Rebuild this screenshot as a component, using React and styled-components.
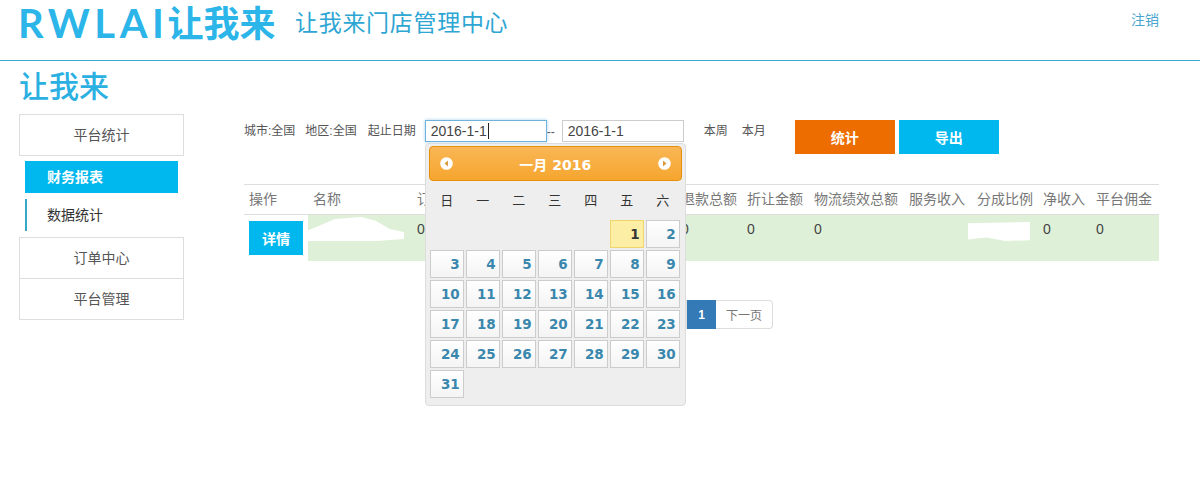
import styled, { createGlobalStyle } from "styled-components";

const GlobalStyle = createGlobalStyle`
  html, body { margin: 0; padding: 0; background: #fff; }
  body {
    font-family: "Liberation Sans", "Noto Sans CJK SC", sans-serif;
    font-size: 14px;
    color: #333;
  }
  #root { min-height: 485px; }
  * { box-sizing: border-box; }
`;

const Header = styled.header`
  height: 61px;
  border-bottom: 1px solid #3aa8cf;
  display: flex;
  align-items: flex-start;
  padding-left: 18px;
  padding-right: 41px;
`;

const Logo = styled.div`
  font-family: "Lato", "Noto Sans CJK SC", sans-serif;
  font-size: 40px;
  font-weight: 700;
  line-height: 47px;
  color: #2cb5e8;
  display: flex;
  height: 47px;
  width: 277px;
  white-space: nowrap;
  span { letter-spacing: 4.6px; }
  b { font-size: 36px; font-weight: 700; margin-left: -1px; }
`;

const SiteTitle = styled.div`
  font-size: 23px;
  line-height: 47px;
  color: #2ea6d3;
  letter-spacing: 0.7px;
  flex: 1;
`;

const Logout = styled.a`
  font-size: 14px;
  line-height: 40px;
  color: #4aa5d0;
`;

const Brand = styled.h1`
  margin: 0;
  padding-left: 19px;
  height: 53px;
  font-size: 30px;
  line-height: 52px;
  font-weight: 500;
  color: #2bb0e2;
`;

const Body = styled.div`
  display: flex;
  padding-left: 19px;
`;

const Sidebar = styled.nav`
  width: 165px;
  flex-shrink: 0;
  display: flex;
  flex-direction: column;
`;

const NavItem = styled.div`
  height: 42px;
  margin-top: ${(p) => p.$joined ? -1 : 0}px;
  padding-bottom: 2px;
  border: 1px solid #ddd;
  display: flex;
  align-items: center;
  justify-content: center;
  color: #555;
`;

const SubMenu = styled.div`
  padding: 5px 6px 6px;
  display: flex;
  flex-direction: column;
  gap: 6px;
`;

const SubItem = styled.div`
  height: 32px;
  line-height: 32px;
  padding-left: ${(p) => p.$active ? 22 : 20}px;
  font-weight: ${(p) => p.$active ? 700 : 400};
  color: ${(p) => p.$active ? "#fff" : "#333"};
  background: ${(p) => p.$active ? "#00b7ee" : "transparent"};
  border-left: ${(p) => p.$active ? "none" : "2px solid #37a9c6"};
`;

const Main = styled.main`
  width: 915px;
  margin-left: 60px;
  padding-top: 6px;
`;

const Filters = styled.div`
  height: 34px;
  display: flex;
  align-items: flex-start;
  font-size: 12px;
  color: #555;
`;

const FilterText = styled.span`
  line-height: 22px;
  margin-left: ${(p) => p.$gap || 0}px;
  white-space: nowrap;
`;

const DateWrap = styled.div`
  position: relative;
  margin-left: ${(p) => p.$gap || 0}px;
`;

const DateField = styled.div`
  height: 22px;
  width: ${(p) => p.$w}px;
  padding-left: 5px;
  font-size: 14px;
  line-height: 20px;
  color: #444;
  border: 1px solid ${(p) => p.$focus ? "#6fb3dc" : "#ccc"};
  box-shadow: ${(p) => p.$focus ? "0 0 3px rgba(102,175,233,.6)" : "none"};
  i {
    display: inline-block;
    width: 1px;
    height: 16px;
    margin-left: 1px;
    background: #222;
    vertical-align: -3px;
  }
`;

const Dash = styled.span`
  width: 15px;
  text-align: left;
  font-size: 12px;
  line-height: 24px;
  color: #555;
`;

const ActionButton = styled.button`
  width: 100px;
  height: 34px;
  margin-left: ${(p) => p.$gap}px;
  border: none;
  background: ${(p) => p.$bg};
  color: #fff;
  font: 700 14px "Liberation Sans", "Noto Sans CJK SC", sans-serif;
`;

const Picker = styled.div`
  position: absolute;
  top: 23px;
  left: 0;
  z-index: 5;
  width: 261px;
  height: 263px;
  padding: 2px 3px 3px;
  background: #eee;
  border: 1px solid #ddd;
  border-radius: 4px;
  color: #333;
`;

const PickerHead = styled.div`
  height: 35px;
  display: flex;
  align-items: center;
  justify-content: space-between;
  padding: 0 10px;
  border: 1px solid #e78f08;
  border-radius: 4px;
  background: linear-gradient(#f9b655, #f6a62f);
  color: #fff;
  font: 700 14px "DejaVu Sans", "Noto Sans CJK SC", sans-serif;
`;

const WeekRow = styled.div`
  display: grid;
  grid-template-columns: repeat(7, 36px);
  height: 39px;
  padding-bottom: 2px;
  align-items: center;
  justify-items: center;
  font-size: 13px;
  color: #333;
`;

const Days = styled.div`
  display: grid;
  grid-template-columns: repeat(7, 34px);
  grid-auto-rows: 28px;
  gap: 2px;
  margin-left: 1px;
`;

const Day = styled.div`
  border: 1px solid ${(p) => p.$today ? "#f0d46c" : "#ccc"};
  background: ${(p) => p.$today ? "#fdeea5" : "linear-gradient(#fff, #f4f4f4)"};
  color: ${(p) => p.$today ? "#363636" : "#3a87ad"};
  font: 700 13.5px/26px "DejaVu Sans", sans-serif;
  text-align: right;
  padding-right: 3px;
  grid-column-start: ${(p) => p.$start || "auto"};
`;

const Table = styled.div`
  margin-top: 30px;
  border-top: 1px solid #ddd;
`;

const Row = styled.div`
  display: grid;
  grid-template-columns: 64px 104px repeat(5, 66px) 67px 95px 68px 66px 53px 68px;
`;

const HeadRow = styled(Row)`
  height: 30px;
  border-bottom: 1px solid #ddd;
  color: #777;
  line-height: 29px;
  white-space: nowrap;
  span { padding-left: 5px; }
`;

const DataRow = styled(Row)`
  height: 45px;
`;

const ActionCell = styled.div`
  padding: 6px 5px;
  background: #fff;
`;

const DetailButton = styled.button`
  width: 54px;
  height: 34px;
  border: none;
  background: #00b7ee;
  color: #fff;
  font: 700 14px "Liberation Sans", "Noto Sans CJK SC", sans-serif;
`;

const DataCell = styled.div`
  position: relative;
  padding: 5px;
  line-height: 18px;
  background: #dff0d8;
  color: #444;
`;

// hand-painted white patches that hide data in the screenshot
const Redact = styled.div`
  position: absolute;
  background: #fff;
  filter: blur(0.6px);
  top: ${(p) => p.$top}px;
  left: ${(p) => p.$left}px;
  width: ${(p) => p.$w}px;
  height: ${(p) => p.$h}px;
  clip-path: ${(p) => p.$clip};
`;

const Pager = styled.div`
  display: flex;
  margin: 40px 0 0 386px;
  height: 29px;
  font-size: 12px;
`;

const PageLink = styled.a`
  width: ${(p) => p.$w}px;
  display: flex;
  align-items: center;
  justify-content: center;
  color: ${(p) => p.$active ? "#fff" : "#777"};
  font-weight: ${(p) => p.$active ? 700 : 400};
  background: ${(p) => p.$active ? "#337ab7" : "#fff"};
  border: 1px solid ${(p) => p.$active ? "#337ab7" : "#ddd"};
  border-left-width: ${(p) => p.$active ? 1 : 0}px;
  border-radius: ${(p) => p.$last ? "0 4px 4px 0" : 0};
`;

function Arrow({ dir }) {
  return (
    <svg width="13" height="13" viewBox="0 0 13 13">
      <circle cx="6.5" cy="6.5" r="6.3" fill="#fff" />
      <path d={dir === "left" ? "M8 3.5 L4.5 6.5 L8 9.5 Z" : "M5 3.5 L8.5 6.5 L5 9.5 Z"} fill="#d99a3c" />
    </svg>
  );
}

const heads = ["操作", "名称", "订单数量", "订单总额", "实收总额", "优惠总额", "退款总额", "折让金额", "物流绩效总额", "服务收入", "分成比例", "净收入", "平台佣金"];
const weekDays = ["日", "一", "二", "三", "四", "五", "六"];
const dayList = Array.from({ length: 31 }, (_, i) => i + 1);

export default function App() {
  return (
    <>
      <GlobalStyle />
      <Header>
        <Logo><span>RWLAI</span><b>让我来</b></Logo>
        <SiteTitle>让我来门店管理中心</SiteTitle>
        <Logout>注销</Logout>
      </Header>
      <Brand>让我来</Brand>
      <Body>
        <Sidebar>
          <NavItem>平台统计</NavItem>
          <SubMenu>
            <SubItem $active>财务报表</SubItem>
            <SubItem>数据统计</SubItem>
          </SubMenu>
          <NavItem>订单中心</NavItem>
          <NavItem $joined>平台管理</NavItem>
        </Sidebar>
        <Main>
          <Filters>
            <FilterText>城市:全国</FilterText>
            <FilterText $gap={10}>地区:全国</FilterText>
            <FilterText $gap={11}>起止日期</FilterText>
            <DateWrap $gap={9}>
              <DateField $w={122} $focus>2016-1-1<i /></DateField>
              <Picker>
                <PickerHead>
                  <Arrow dir="left" />
                  <span>一月 2016</span>
                  <Arrow dir="right" />
                </PickerHead>
                <WeekRow>
                  {weekDays.map((d) => <span key={d}>{d}</span>)}
                </WeekRow>
                <Days>
                  {dayList.map((d) => (
                    <Day key={d} $today={d === 1} $start={d === 1 ? 6 : undefined}>{d}</Day>
                  ))}
                </Days>
              </Picker>
            </DateWrap>
            <Dash>--</Dash>
            <DateField $w={122}>2016-1-1</DateField>
            <FilterText $gap={20}>本周</FilterText>
            <FilterText $gap={14}>本月</FilterText>
            <ActionButton $gap={29} $bg="#ee6d00">统计</ActionButton>
            <ActionButton $gap={4} $bg="#00b7ee">导出</ActionButton>
          </Filters>
          <Table>
            <HeadRow>
              {heads.map((h) => <span key={h}>{h}</span>)}
            </HeadRow>
            <DataRow>
              <ActionCell><DetailButton>详情</DetailButton></ActionCell>
              <DataCell>
                <Redact $top={2} $left={0} $w={96} $h={24} $clip="polygon(0 55%, 10% 40%, 28% 8%, 55% 0, 70% 15%, 85% 50%, 100% 62%, 100% 92%, 72% 100%, 0 100%)" />
              </DataCell>
              {heads.slice(2, 10).map((h, i) => <DataCell key={h}>{i === 7 ? "" : "0"}</DataCell>)}
              <DataCell>
                <Redact $top={7} $left={-4} $w={62} $h={19} $clip="polygon(0 6%, 100% 0, 100% 96%, 60% 100%, 30% 82%, 0 92%)" />
              </DataCell>
              <DataCell>0</DataCell>
              <DataCell>0</DataCell>
            </DataRow>
          </Table>
          <Pager>
            <PageLink $w={57}>上一页</PageLink>
            <PageLink $w={29} $active>1</PageLink>
            <PageLink $w={57} $last>下一页</PageLink>
          </Pager>
        </Main>
      </Body>
    </>
  );
}
